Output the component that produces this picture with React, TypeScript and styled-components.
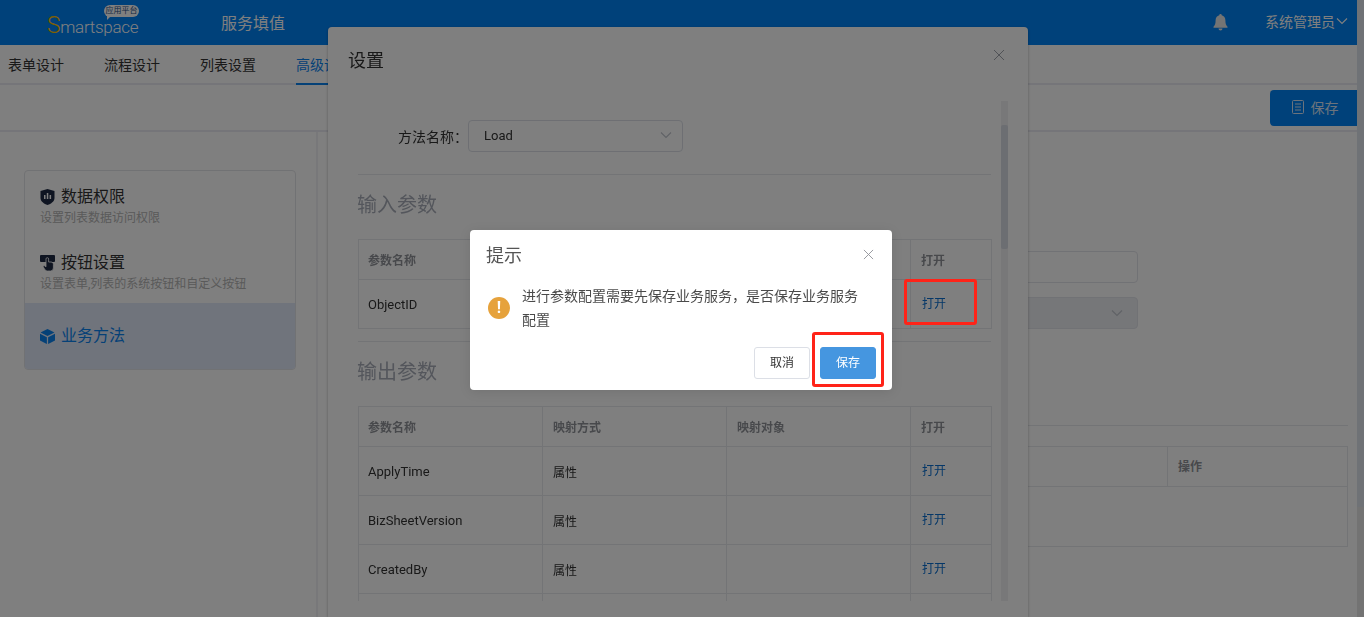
import React from 'react';
import styled, { createGlobalStyle } from 'styled-components';

const FONT = `Roboto, "Noto Sans CJK SC", sans-serif`;

const GlobalStyle = createGlobalStyle`
  html, body {
    margin: 0;
    padding: 0;
    height: 100%;
    overflow: hidden;
    background: #fff;
    font-family: ${FONT};
    color: #333;
  }
  * { box-sizing: border-box; }
`;

const Shell = styled.div`
  display: flex;
  width: 1364px;
  height: 617px;
  overflow: hidden;
`;

const Page = styled.div`
  flex: 1;
  min-width: 0;
  display: flex;
  flex-direction: column;
`;

const PageScroll = styled.div`
  width: 7px;
  background: #e6e6e6;
`;

const PageThumb = styled.div`
  height: 507px;
  background: #dfe4ec;
`;

const Header = styled.header`
  height: 45px;
  flex: none;
  display: flex;
  align-items: center;
  background: #0082f5;
  color: #fff;
  padding: 0 9px 0 47px;
`;

const Logo = styled.div`
  position: relative;
  width: 174px;
  font-size: 17px;
  font-weight: 300;
  letter-spacing: -0.3px;
  line-height: 26px;
  padding-top: 7px;
  color: #fff;
`;

const LogoInitial = styled.span`
  font-size: 23px;
  color: #ffc000;
`;

const LogoBadge = styled.span`
  position: absolute;
  left: 57px;
  top: -1px;
  width: 35px;
  height: 12px;
  border-radius: 6px;
  background: #fff;
  color: #1f4f86;
  font-size: 8px;
  font-weight: 400;
  letter-spacing: 0;
  line-height: 12px;
  text-align: center;
  white-space: nowrap;

  &::after {
    content: '';
    position: absolute;
    left: 3px;
    bottom: -3px;
    border-left: 4px solid #fff;
    border-bottom: 4px solid transparent;
  }
`;

const HeaderTitle = styled.div`
  font-size: 16px;
  flex: 1;
  margin-top: -1px;
`;

const UserName = styled.div`
  display: flex;
  align-items: center;
  gap: 1px;
  font-size: 14px;
  margin: -3px 0 0 37px;
`;

const Tabs = styled.nav`
  height: 40px;
  flex: none;
  display: flex;
  gap: 40px;
  padding-left: 8px;
  border-bottom: 2px solid #eaeaf2;
`;

const Tab = styled.div<{ $active?: boolean }>`
  font-size: 14px;
  line-height: 40px;
  height: 40px;
  color: ${p => (p.$active ? '#0a82ee' : '#333')};
  border-bottom: 2px solid ${p => (p.$active ? '#0a82ee' : 'transparent')};
`;

const Toolbar = styled.div`
  height: 47px;
  flex: none;
  display: flex;
  justify-content: flex-end;
  padding-top: 5px;
  border-bottom: 2px solid #eaeaf2;
`;

const SaveButton = styled.div`
  width: 87px;
  height: 36px;
  display: flex;
  align-items: center;
  justify-content: center;
  gap: 7px;
  padding: 0 0 2px 3px;
  background: #0082f5;
  color: #d8e6f8;
  border-radius: 4px 0 0 4px;
  font-size: 14px;
`;

const Content = styled.div`
  flex: 1;
  display: flex;
  min-height: 0;
`;

const Side = styled.aside`
  width: 318px;
  flex: none;
  padding: 38px 20px 0 24px;
  border-right: 2px solid #f0f0f4;
`;

const SideCard = styled.div`
  height: 200px;
  border: 1px solid #e2e4e8;
  border-radius: 4px;
  overflow: hidden;
`;

const SideItem = styled.div<{ $active?: boolean }>`
  height: ${p => (p.$active ? '67px' : '66px')};
  padding: ${p => (p.$active ? '21px' : '14px')} 15px 0;
  background: ${p => (p.$active ? '#e0e8f8' : 'transparent')};
  color: ${p => (p.$active ? '#0a82ee' : '#333')};
`;

const SideTitle = styled.div`
  display: flex;
  align-items: center;
  gap: 6px;
  font-size: 16px;
  line-height: 24px;
`;

const SideSub = styled.div`
  font-size: 12px;
  line-height: 18px;
  color: #b4b4b4;
  white-space: nowrap;
`;

const Panel = styled.main`
  flex: 1;
  min-width: 0;
  padding: 119px 9px 0 23px;
`;

const GhostField = styled.div<{ $disabled?: boolean }>`
  width: 658px;
  height: 32px;
  margin: 0 0 14px 139px;
  border: 1px solid #e2e4ea;
  border-radius: 4px;
  background: ${p => (p.$disabled ? '#eceef2' : '#fff')};
  display: flex;
  align-items: center;
  justify-content: flex-end;
  padding-right: 14px;
`;

const PanelRule = styled.div`
  height: 1px;
  background: #e6e8ec;
  margin-top: 96px;
`;

const GhostTable = styled.div`
  margin-top: 20px;
  height: 101px;
  border: 1px solid #e6e8ec;
`;

const GhostHead = styled.div`
  height: 40px;
  border-bottom: 1px solid #e6e8ec;
  display: flex;
  justify-content: flex-end;
`;

const GhostHeadCell = styled.div`
  width: 180px;
  border-left: 1px solid #e6e8ec;
  padding-left: 10px;
  font-size: 12px;
  font-weight: 700;
  line-height: 40px;
  color: #909399;
`;

const Overlay = styled.div`
  position: fixed;
  inset: 0;
  background: rgba(0, 0, 0, 0.5);
`;

const SettingsModal = styled.section`
  position: fixed;
  left: 328px;
  top: 27px;
  width: 700px;
  height: 590px;
  background: #fff;
  border-radius: 4px 4px 0 0;
  box-shadow: 0 1px 3px rgba(0, 0, 0, 0.3);
  display: flex;
  flex-direction: column;
`;

const ModalTitle = styled.div`
  height: 74px;
  flex: none;
  padding: 21px 23px 0 20px;
  font-size: 18px;
  line-height: 26px;
  display: flex;
  justify-content: space-between;
`;

const CloseMark = styled.span`
  display: flex;
  margin-top: 1px;
  color: #a0a4ac;
`;

const ModalBody = styled.div`
  height: 500px;
  display: flex;
  overflow: hidden;
  padding-left: 30px;
`;

const ModalInner = styled.div`
  width: 633px;
  flex: none;
`;

const ModalScroll = styled.div`
  width: 7px;
  margin-left: 10px;
  background: #f0f0f2;
  padding-top: 24px;
`;

const ModalThumb = styled.div`
  height: 124px;
  background: #d8dce4;
  border-radius: 2px;
`;

const MethodRow = styled.div`
  height: 74px;
  padding-top: 19px;
  display: flex;
  align-items: flex-start;
  border-bottom: 1px solid #e6e8ec;
`;

const MethodLabel = styled.label`
  width: 110px;
  text-align: right;
  font-size: 14px;
  line-height: 32px;
  padding-top: 1px;
`;

const MethodSelect = styled.div`
  width: 215px;
  height: 32px;
  display: flex;
  align-items: center;
  justify-content: space-between;
  padding: 0 10px 2px 15px;
  border: 1px solid #dcdfe6;
  border-radius: 4px;
  font-size: 13px;
`;

const SectionHeading = styled.h3`
  margin: 0 0 0 -1px;
  font-size: 20px;
  font-weight: 400;
  line-height: 28px;
  color: #a8adb8;
  padding: 16px 0 20px;
`;

const ParamTable = styled.table`
  width: 633px;
  table-layout: fixed;
  border-collapse: collapse;
  border: 1px solid #e6e8ec;
  font-size: 12px;

  th, td {
    border: 1px solid #e6e8ec;
    padding: 0 0 0 10px;
    text-align: left;
  }

  th:first-child, td:first-child {
    padding-left: 9px;
  }

  th {
    height: 40px;
    font-weight: 700;
    color: #909399;
  }

  td {
    height: 49px;
  }
`;

const NameCell = styled.td`
  font-size: 13px;
`;

const OpenLink = styled.a`
  color: #0a6fd0;
  position: relative;
  top: -2px;
  left: 1px;
`;

const SectionRule = styled.div`
  height: 1px;
  background: #e6e8ec;
  margin-top: 12px;
`;

const Dialog = styled.div`
  position: fixed;
  left: 470px;
  top: 230px;
  width: 422px;
  height: 160px;
  background: #fff;
  border-radius: 4px;
  padding: 16px 16px;
  box-shadow: 0 2px 12px rgba(0, 0, 0, 0.1);
`;

const DialogHead = styled.div`
  display: flex;
  justify-content: space-between;
  align-items: center;
  font-size: 18px;
  line-height: 20px;
  color: #555;
`;

const DialogClose = styled.span`
  display: flex;
  color: #909399;
  margin-right: 2px;
  margin-top: -3px;
`;

const DialogBody = styled.div`
  display: flex;
  align-items: center;
  gap: 12px;
  margin-top: 18px;
  padding-left: 2px;
  font-size: 14px;
  line-height: 24px;
  color: #4a4a4a;
`;

const DialogText = styled.span`
  width: 340px;
`;

const WarnIcon = styled.span`
  width: 22px;
  height: 22px;
  flex: none;
  border-radius: 50%;
  background: #e6a23c;
  color: #fff;
  font-size: 16px;
  font-weight: 700;
  line-height: 22px;
  text-align: center;
`;

const DialogFoot = styled.div`
  display: flex;
  justify-content: flex-end;
  gap: 10px;
  margin-top: 15px;
`;

const DialogButton = styled.button<{ $primary?: boolean }>`
  width: 56px;
  height: 32px;
  padding: 0 0 3px;
  font-family: inherit;
  font-size: 12px;
  border-radius: 3px;
  border: 1px solid ${p => (p.$primary ? '#4596e0' : '#dcdfe6')};
  background: ${p => (p.$primary ? '#4596e0' : '#fff')};
  color: ${p => (p.$primary ? '#fff' : '#333')};
`;

const RedMark = styled.div<{ $left: number; $top: number; $w: number; $h: number }>`
  position: fixed;
  left: ${p => p.$left}px;
  top: ${p => p.$top}px;
  width: ${p => p.$w}px;
  height: ${p => p.$h}px;
  border: 3px solid #ff2318;
  border-radius: 3px;
`;

const Chevron = ({ size = 12, color = '#c0c4cc' }: { size?: number; color?: string }) => (
  <svg width={size} height={size} viewBox="0 0 12 12" fill="none" stroke={color} strokeWidth="1.1">
    <path d="M1 3.5 6 8.5 11 3.5" />
  </svg>
);

const Cross = ({ size }: { size: number }) => (
  <svg width={size} height={size} viewBox="0 0 12 12" fill="none" stroke="currentColor" strokeWidth="1">
    <path d="M1 1 11 11M11 1 1 11" />
  </svg>
);

const Bell = () => (
  <svg width="15" height="17" viewBox="0 0 15 17" fill="#e8e8e8">
    <path d="M7.5 0a1.2 1.2 0 0 1 1.2 1.3C11 1.9 12.400 3.800 12.400 6.200c0 3.400.6 5 2.100 6.600v.9H.5v-.9C2 11.200 2.600 9.600 2.600 6.200 2.600 3.800 4 1.900 6.300 1.300A1.200 1.200 0 0 1 7.500 0Z" />
    <path d="M5.500 14.500h4a2 2 0 0 1-4 0Z" />
  </svg>
);

const DocIcon = () => (
  <svg width="12" height="14" viewBox="0 0 12 14" fill="none" stroke="#d8e6f8" strokeWidth="1">
    <rect x="0.500" y="0.500" width="11" height="13" rx="1" />
    <path d="M3 4h6M3 7h6M3 10h6" />
  </svg>
);

const ShieldIcon = () => (
  <svg width="15" height="16" viewBox="0 0 15 16">
    <path d="M7.500 0 14.500 2v7c0 3.500-3.500 5.800-7 7-3.500-1.200-7-3.500-7-7V2Z" fill="#1f2a44" />
    <path d="M4 6h1.500v4H4zM6.800 4h1.500v6H6.800zM9.600 6h1.500v4H9.600z" fill="#fff" />
  </svg>
);

const HandIcon = () => (
  <svg width="15" height="16" viewBox="0 0 15 16">
    <rect x="0" y="0" width="15" height="7" rx="1" fill="#1f2a44" />
    <path d="M6 4a1.300 1.300 0 0 1 2.600 0v3h2.400c1.300 0 2.400 1 2.400 2.400V13a3 3 0 0 1-3 3H7.400a3 3 0 0 1-2.400-1.200L3 11.500l1.100-1 1.900 1.300Z" fill="#1f2a44" stroke="#fff" strokeWidth="0.800" />
  </svg>
);

const CubeIcon = () => (
  <svg width="15" height="15" viewBox="0 0 14 15" fill="#0a82ee" preserveAspectRatio="none">
    <path d="M7 0 13.500 3.500 7 7 .500 3.500Z" />
    <path d="M0 4.700 6.400 8.200V15L0 11.500Z" />
    <path d="M14 4.700 7.600 8.200V15L14 11.500Z" />
  </svg>
);

const COLUMNS = [184, 184, 184, 81];

const outputRows = ['ApplyTime', 'BizSheetVersion', 'CreatedBy', ''];

const ColGroup = () => (
  <colgroup>
    {COLUMNS.map((w, i) => (
      <col key={i} style={{ width: w }} />
    ))}
  </colgroup>
);

export default function App() {
  return (
    <Shell>
      <GlobalStyle />
      <Page>
        <Header>
          <Logo>
            <LogoInitial>S</LogoInitial>martspace
            <LogoBadge>应用平台</LogoBadge>
          </Logo>
          <HeaderTitle>服务填值</HeaderTitle>
          <Bell />
          <UserName>
            系统管理员
            <Chevron color="#fff" />
          </UserName>
        </Header>
        <Tabs>
          <Tab>表单设计</Tab>
          <Tab>流程设计</Tab>
          <Tab>列表设置</Tab>
          <Tab $active>高级设置</Tab>
        </Tabs>
        <Toolbar>
          <SaveButton>
            <DocIcon />
            保存
          </SaveButton>
        </Toolbar>
        <Content>
          <Side>
            <SideCard>
              <SideItem>
                <SideTitle>
                  <ShieldIcon />
                  数据权限
                </SideTitle>
                <SideSub>设置列表数据访问权限</SideSub>
              </SideItem>
              <SideItem>
                <SideTitle>
                  <HandIcon />
                  按钮设置
                </SideTitle>
                <SideSub>设置表单,列表的系统按钮和自定义按钮</SideSub>
              </SideItem>
              <SideItem $active>
                <SideTitle>
                  <CubeIcon />
                  业务方法
                </SideTitle>
              </SideItem>
            </SideCard>
          </Side>
          <Panel>
            <GhostField />
            <GhostField $disabled>
              <Chevron />
            </GhostField>
            <PanelRule />
            <GhostTable>
              <GhostHead>
                <GhostHeadCell>操作</GhostHeadCell>
              </GhostHead>
            </GhostTable>
          </Panel>
        </Content>
      </Page>
      <PageScroll>
        <PageThumb />
      </PageScroll>

      <SettingsModal>
        <ModalTitle>
          设置
          <CloseMark>
            <Cross size={12} />
          </CloseMark>
        </ModalTitle>
        <ModalBody>
          <ModalInner>
            <MethodRow>
              <MethodLabel>方法名称：</MethodLabel>
              <MethodSelect>
                Load
                <Chevron />
              </MethodSelect>
            </MethodRow>
            <SectionHeading>输入参数</SectionHeading>
            <ParamTable>
              <ColGroup />
              <thead>
                <tr>
                  <th>参数名称</th>
                  <th />
                  <th />
                  <th>打开</th>
                </tr>
              </thead>
              <tbody>
                <tr>
                  <NameCell>ObjectID</NameCell>
                  <td />
                  <td />
                  <td>
                    <OpenLink>打开</OpenLink>
                  </td>
                </tr>
              </tbody>
            </ParamTable>
            <SectionRule />
            <SectionHeading>输出参数</SectionHeading>
            <ParamTable>
              <ColGroup />
              <thead>
                <tr>
                  <th>参数名称</th>
                  <th>映射方式</th>
                  <th>映射对象</th>
                  <th>打开</th>
                </tr>
              </thead>
              <tbody>
                {outputRows.map((name, i) => (
                  <tr key={i}>
                    <NameCell>{name}</NameCell>
                    <td>{name && '属性'}</td>
                    <td />
                    <td>{name && <OpenLink>打开</OpenLink>}</td>
                  </tr>
                ))}
              </tbody>
            </ParamTable>
          </ModalInner>
          <ModalScroll>
            <ModalThumb />
          </ModalScroll>
        </ModalBody>
      </SettingsModal>

      <Overlay />

      <Dialog>
        <DialogHead>
          提示
          <DialogClose>
            <Cross size={11} />
          </DialogClose>
        </DialogHead>
        <DialogBody>
          <WarnIcon>!</WarnIcon>
          <DialogText>进行参数配置需要先保存业务服务，是否保存业务服务配置</DialogText>
        </DialogBody>
        <DialogFoot>
          <DialogButton>取消</DialogButton>
          <DialogButton $primary>保存</DialogButton>
        </DialogFoot>
      </Dialog>

      <RedMark $left={904} $top={279} $w={73} $h={46} />
      <RedMark $left={812} $top={332} $w={72} $h={55} />
    </Shell>
  );
}
